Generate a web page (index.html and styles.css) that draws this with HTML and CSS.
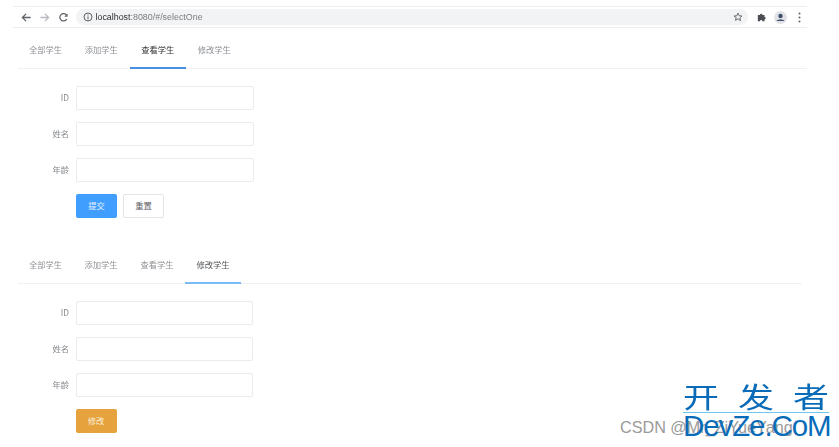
FILE: index.html
```html
<!DOCTYPE html>
<html lang="zh">
<head>
<meta charset="utf-8">
<title>selectOne</title>
<link rel="stylesheet" href="styles.css">
</head>
<body>
<header class="chrome">
  <svg class="nav" width="11" height="11" viewBox="0 0 12 12"><path d="M10.500 6H2M5.500 2L1.500 6l4 4" fill="none" stroke="#5f6368" stroke-width="1.400"/></svg>
  <svg class="nav" width="11" height="11" viewBox="0 0 12 12"><path d="M1.500 6H10M6.500 2l4 4-4 4" fill="none" stroke="#b6b9bd" stroke-width="1.400"/></svg>
  <svg class="nav" width="11" height="11" viewBox="0 0 12 12"><path d="M9.600 7.600A4 4 0 1 1 9.400 3.600" fill="none" stroke="#5f6368" stroke-width="1.400"/><path d="M10.500 1.500v3.600H6.900z" fill="#5f6368"/></svg>
  <div class="omni">
    <svg width="10" height="10" viewBox="0 0 10 10"><circle cx="5" cy="5" r="4" fill="none" stroke="#5f6368"/><path d="M5 4.400v3M5 2.500v1" stroke="#5f6368"/></svg>
    <span class="url"><b>localhost</b>:8080/#/selectOne</span>
    <svg class="star" width="10" height="10" viewBox="0 0 12 12"><path d="M6 1.300l1.400 3.200 3.400.3-2.600 2.300.8 3.400L6 8.200 3 10l.8-3.400L1.200 4.800l3.400-.3z" fill="none" stroke="#5f6368" stroke-width="1.100"/></svg>
  </div>
  <svg class="ext" width="10" height="10" viewBox="0 0 12 12"><path d="M1 3.500h2.600a1.400 1.400 0 0 1 2.800 0H9v2.600a1.400 1.400 0 0 1 0 2.800V11H6.400a1.400 1.400 0 0 0-2.800 0H1z" fill="#4a4e52"/></svg>
  <svg class="avatar" width="13" height="13" viewBox="0 0 13 13"><circle cx="6.500" cy="6.500" r="6.500" fill="#e1e3e8"/><circle cx="6.500" cy="5" r="2.200" fill="#3f4f68"/><path d="M2.500 10c.6-2 7.400-2 8 0z" fill="#3f4f68"/></svg>
  <svg class="menu" width="3" height="11" viewBox="0 0 3 11"><circle cx="1.500" cy="1.500" r="1" fill="#5f6368"/><circle cx="1.500" cy="5.500" r="1" fill="#5f6368"/><circle cx="1.500" cy="9.500" r="1" fill="#5f6368"/></svg>
</header>

<section class="panel first">
  <nav class="tabs">
    <a class="tab">全部学生</a>
    <a class="tab">添加学生</a>
    <a class="tab active">查看学生</a>
    <a class="tab">修改学生</a>
  </nav>
  <form class="form">
    <div class="row"><label class="lbl">ID</label><div class="field"></div></div>
    <div class="row"><label class="lbl">姓名</label><div class="field"></div></div>
    <div class="row"><label class="lbl">年龄</label><div class="field"></div></div>
    <div class="row actions">
      <span class="btn primary">提交</span>
      <span class="btn plain">重置</span>
    </div>
  </form>
</section>

<section class="panel second">
  <nav class="tabs">
    <a class="tab">全部学生</a>
    <a class="tab">添加学生</a>
    <a class="tab">查看学生</a>
    <a class="tab active">修改学生</a>
  </nav>
  <form class="form">
    <div class="row"><label class="lbl">ID</label><div class="field"></div></div>
    <div class="row"><label class="lbl">姓名</label><div class="field"></div></div>
    <div class="row"><label class="lbl">年龄</label><div class="field"></div></div>
    <div class="row actions">
      <span class="btn warning">修改</span>
    </div>
  </form>
</section>

<div class="csdn">CSDN @Mr_ZiYueYang</div>
<div class="mark">
  <div class="mark-cn"><span>开</span><span>发</span><span>者</span></div>
  <div class="mark-en">DevZe.CoM</div>
</div>
</body>
</html>
```
FILE: styles.css
```css
* { box-sizing: border-box; }
html, body { margin: 0; height: 100%; }
body {
  width: 839px;
  height: 447px;
  overflow: hidden;
  position: relative;
  background: #fff;
  font-family: "Noto Sans CJK SC", "Liberation Sans", sans-serif;
  color: #606266;
}
.chrome {
  margin: 6px 32px 0 13px;
  height: 22px;
  display: flex;
  align-items: center;
  padding-left: 7.500px;
  border-top: 1px solid #eceef0;
  border-bottom: 1px solid #eceef0;
  filter: blur(.4px);
}
.nav { margin-right: 7.500px; flex: none; }
.omni {
  width: 672px;
  height: 16px;
  border-radius: 8px;
  background: #f1f3f4;
  display: flex;
  align-items: center;
  padding: 0 5px 0 7px;
  flex: none;
  margin-left: -.500px;
}
.url {
  margin-left: 3px;
  font: 8.900px "Liberation Sans", sans-serif;
  color: #7a7e82;
  flex: 1;
}
.url b { font-weight: 400; color: #303336; }
.ext { margin-left: 9px; flex: none; }
.avatar { margin-left: 7px; flex: none; }
.menu { margin-left: 11px; flex: none; }
.panel { position: relative; }
.first { margin: 0 32px 0 18px; }
.second { margin: 26px 37px 0 18px; }
.tabs {
  display: flex;
  height: 41px;
  border-bottom: 1px solid #eef0f3;
}
.second .tabs { height: 40px; }
.tab {
  width: 56.500px;
  height: 41px;
  line-height: 43px;
  text-align: center;
  font-size: 8.300px;
  color: #8f9296;
  filter: blur(.45px);
}
.second .tab { width: 56px; height: 40px; line-height: 41px; }
.tab.active { color: #303133; border-bottom: 2px solid #4a90e2; }
.second .tab.active { color: #55585c; border-bottom-color: #79bbf5; }
.tab:first-child { width: 55px; }
.second .tab:first-child { width: 55px; }
.form { padding-top: 17px; }
.row {
  display: flex;
  align-items: center;
  height: 24px;
  margin-bottom: 12px;
}
.second .row { height: 23.500px; margin-bottom: 12.500px; }
.lbl {
  width: 51px;
  padding-bottom: 2px;
  text-align: right;
  font-size: 8.300px;
  color: #85888c;
  filter: blur(.45px);
}
.field {
  margin-left: 7px;
  width: 178px;
  height: 100%;
  border: 1px solid #eaebf0;
  border-radius: 2px;
  background: #fff;
}
.second .field { width: 177px; }
.actions { padding-left: 58px; gap: 6px; }
.second .actions { padding-left: 57.500px; }
.btn {
  width: 41px;
  height: 100%;
  padding-bottom: 2px;
  border-radius: 2px;
  display: flex;
  align-items: center;
  justify-content: center;
  font-size: 8.300px;
}
.primary { background: #409eff; color: #e8f3ff; }
.plain { background: #fff; border: 1px solid #e2e4ea; color: #606266; }
.warning { background: #e6a23c; color: #fbeedb; }
.csdn {
  position: absolute;
  left: 620px;
  top: 416px;
  font: 16.200px/22px "Liberation Sans", sans-serif;
  color: #9a9a9a;
  white-space: nowrap;
}
.mark {
  position: absolute;
  left: 683px;
  top: 381px;
  width: 146px;
  color: #0a6cb8;
}
.mark-cn {
  display: flex;
  justify-content: space-between;
  height: 32px;
  border-bottom: 1px solid #6ec6ee;
  font: 36px/28px "Noto Sans CJK SC", sans-serif;
}
.mark-cn span {
  display: block;
  transform: scaleY(.78);
}
.mark-en {
  font: 29.500px/25px "Liberation Sans", sans-serif;
  letter-spacing: -1.100px;
  white-space: nowrap;
}
```
